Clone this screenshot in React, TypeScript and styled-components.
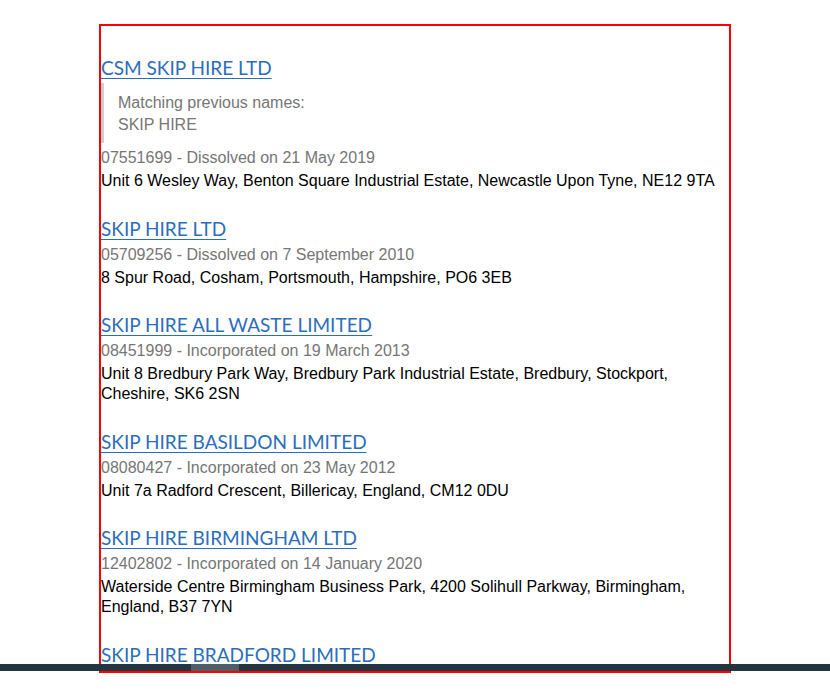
import React from "react";
import styled, { createGlobalStyle } from "styled-components";

const GlobalStyle = createGlobalStyle`
  html, body { margin: 0; padding: 0; background: #ffffff; }
  body { font-family: "Liberation Sans", Arial, sans-serif; }
`;

const Page = styled.div`
  width: 100%;
  height: 697px;
  overflow: hidden;
  padding-top: 24px;
  box-sizing: border-box;
`;

const Frame = styled.div`
  width: 632px;
  height: 649px;
  margin: 0 auto;
  border: 2px solid #ff0000;
  box-sizing: border-box;
  overflow: hidden;
  padding-top: 30px;
`;

const List = styled.ul`
  list-style: none;
  margin: 0;
  padding: 0;
  display: flex;
  flex-direction: column;
  gap: 25.6px;
`;

const Item = styled.li`
  display: flex;
  flex-direction: column;
`;

const Title = styled.a`
  font-family: Lato, "Liberation Sans", sans-serif;
  font-size: 19px;
  line-height: 24px;
  color: #2a6ebb;
  text-decoration: underline;
  text-underline-offset: 3px;
  align-self: flex-start;
`;

const Previous = styled.blockquote`
  margin: 3px 0 0 0;
  padding: 9px 0 7px 14px;
  border-left: 3px solid #d0d0d0;
  color: #767676;
  font-size: 16px;
  line-height: 22px;
  display: flex;
  flex-direction: column;
`;

const Meta = styled.p<{ $after?: boolean }>`
  margin: ${(p) => (p.$after ? "5px" : "4px")} 0 0 0;
  color: #767676;
  font-size: 16px;
  line-height: 20px;
`;

const Address = styled.p`
  margin: 3px 0 0 0;
  color: #000000;
  font-size: 16px;
  line-height: 20px;
`;

const ScrollTrack = styled.div`
  position: fixed;
  left: 0;
  right: 0;
  top: 664px;
  height: 7px;
  background: #233540;
`;

const ScrollThumb = styled.div`
  position: absolute;
  left: 191px;
  top: 0;
  width: 48px;
  height: 7px;
  background: #4d5e66;
`;

type Company = {
  name: string;
  previous?: string[];
  meta?: string;
  address?: string;
};

const companies: Company[] = [
  {
    name: "CSM SKIP HIRE LTD",
    previous: ["SKIP HIRE"],
    meta: "07551699 - Dissolved on 21 May 2019",
    address: "Unit 6 Wesley Way, Benton Square Industrial Estate, Newcastle Upon Tyne, NE12 9TA",
  },
  {
    name: "SKIP HIRE LTD",
    meta: "05709256 - Dissolved on 7 September 2010",
    address: "8 Spur Road, Cosham, Portsmouth, Hampshire, PO6 3EB",
  },
  {
    name: "SKIP HIRE ALL WASTE LIMITED",
    meta: "08451999 - Incorporated on 19 March 2013",
    address: "Unit 8 Bredbury Park Way, Bredbury Park Industrial Estate, Bredbury, Stockport, Cheshire, SK6 2SN",
  },
  {
    name: "SKIP HIRE BASILDON LIMITED",
    meta: "08080427 - Incorporated on 23 May 2012",
    address: "Unit 7a Radford Crescent, Billericay, England, CM12 0DU",
  },
  {
    name: "SKIP HIRE BIRMINGHAM LTD",
    meta: "12402802 - Incorporated on 14 January 2020",
    address: "Waterside Centre Birmingham Business Park, 4200 Solihull Parkway, Birmingham, England, B37 7YN",
  },
  {
    name: "SKIP HIRE BRADFORD LIMITED",
  },
];

export default function App() {
  return (
    <>
      <GlobalStyle />
      <Page>
        <Frame>
          <List>
            {companies.map((c) => (
              <Item key={c.name}>
                <Title href="#">{c.name}</Title>
                {c.previous && (
                  <Previous>
                    <span>Matching previous names:</span>
                    {c.previous.map((p) => (
                      <span key={p}>{p}</span>
                    ))}
                  </Previous>
                )}
                {c.meta && <Meta $after={!!c.previous}>{c.meta}</Meta>}
                {c.address && <Address>{c.address}</Address>}
              </Item>
            ))}
          </List>
        </Frame>
        <ScrollTrack>
          <ScrollThumb />
        </ScrollTrack>
      </Page>
    </>
  );
}
